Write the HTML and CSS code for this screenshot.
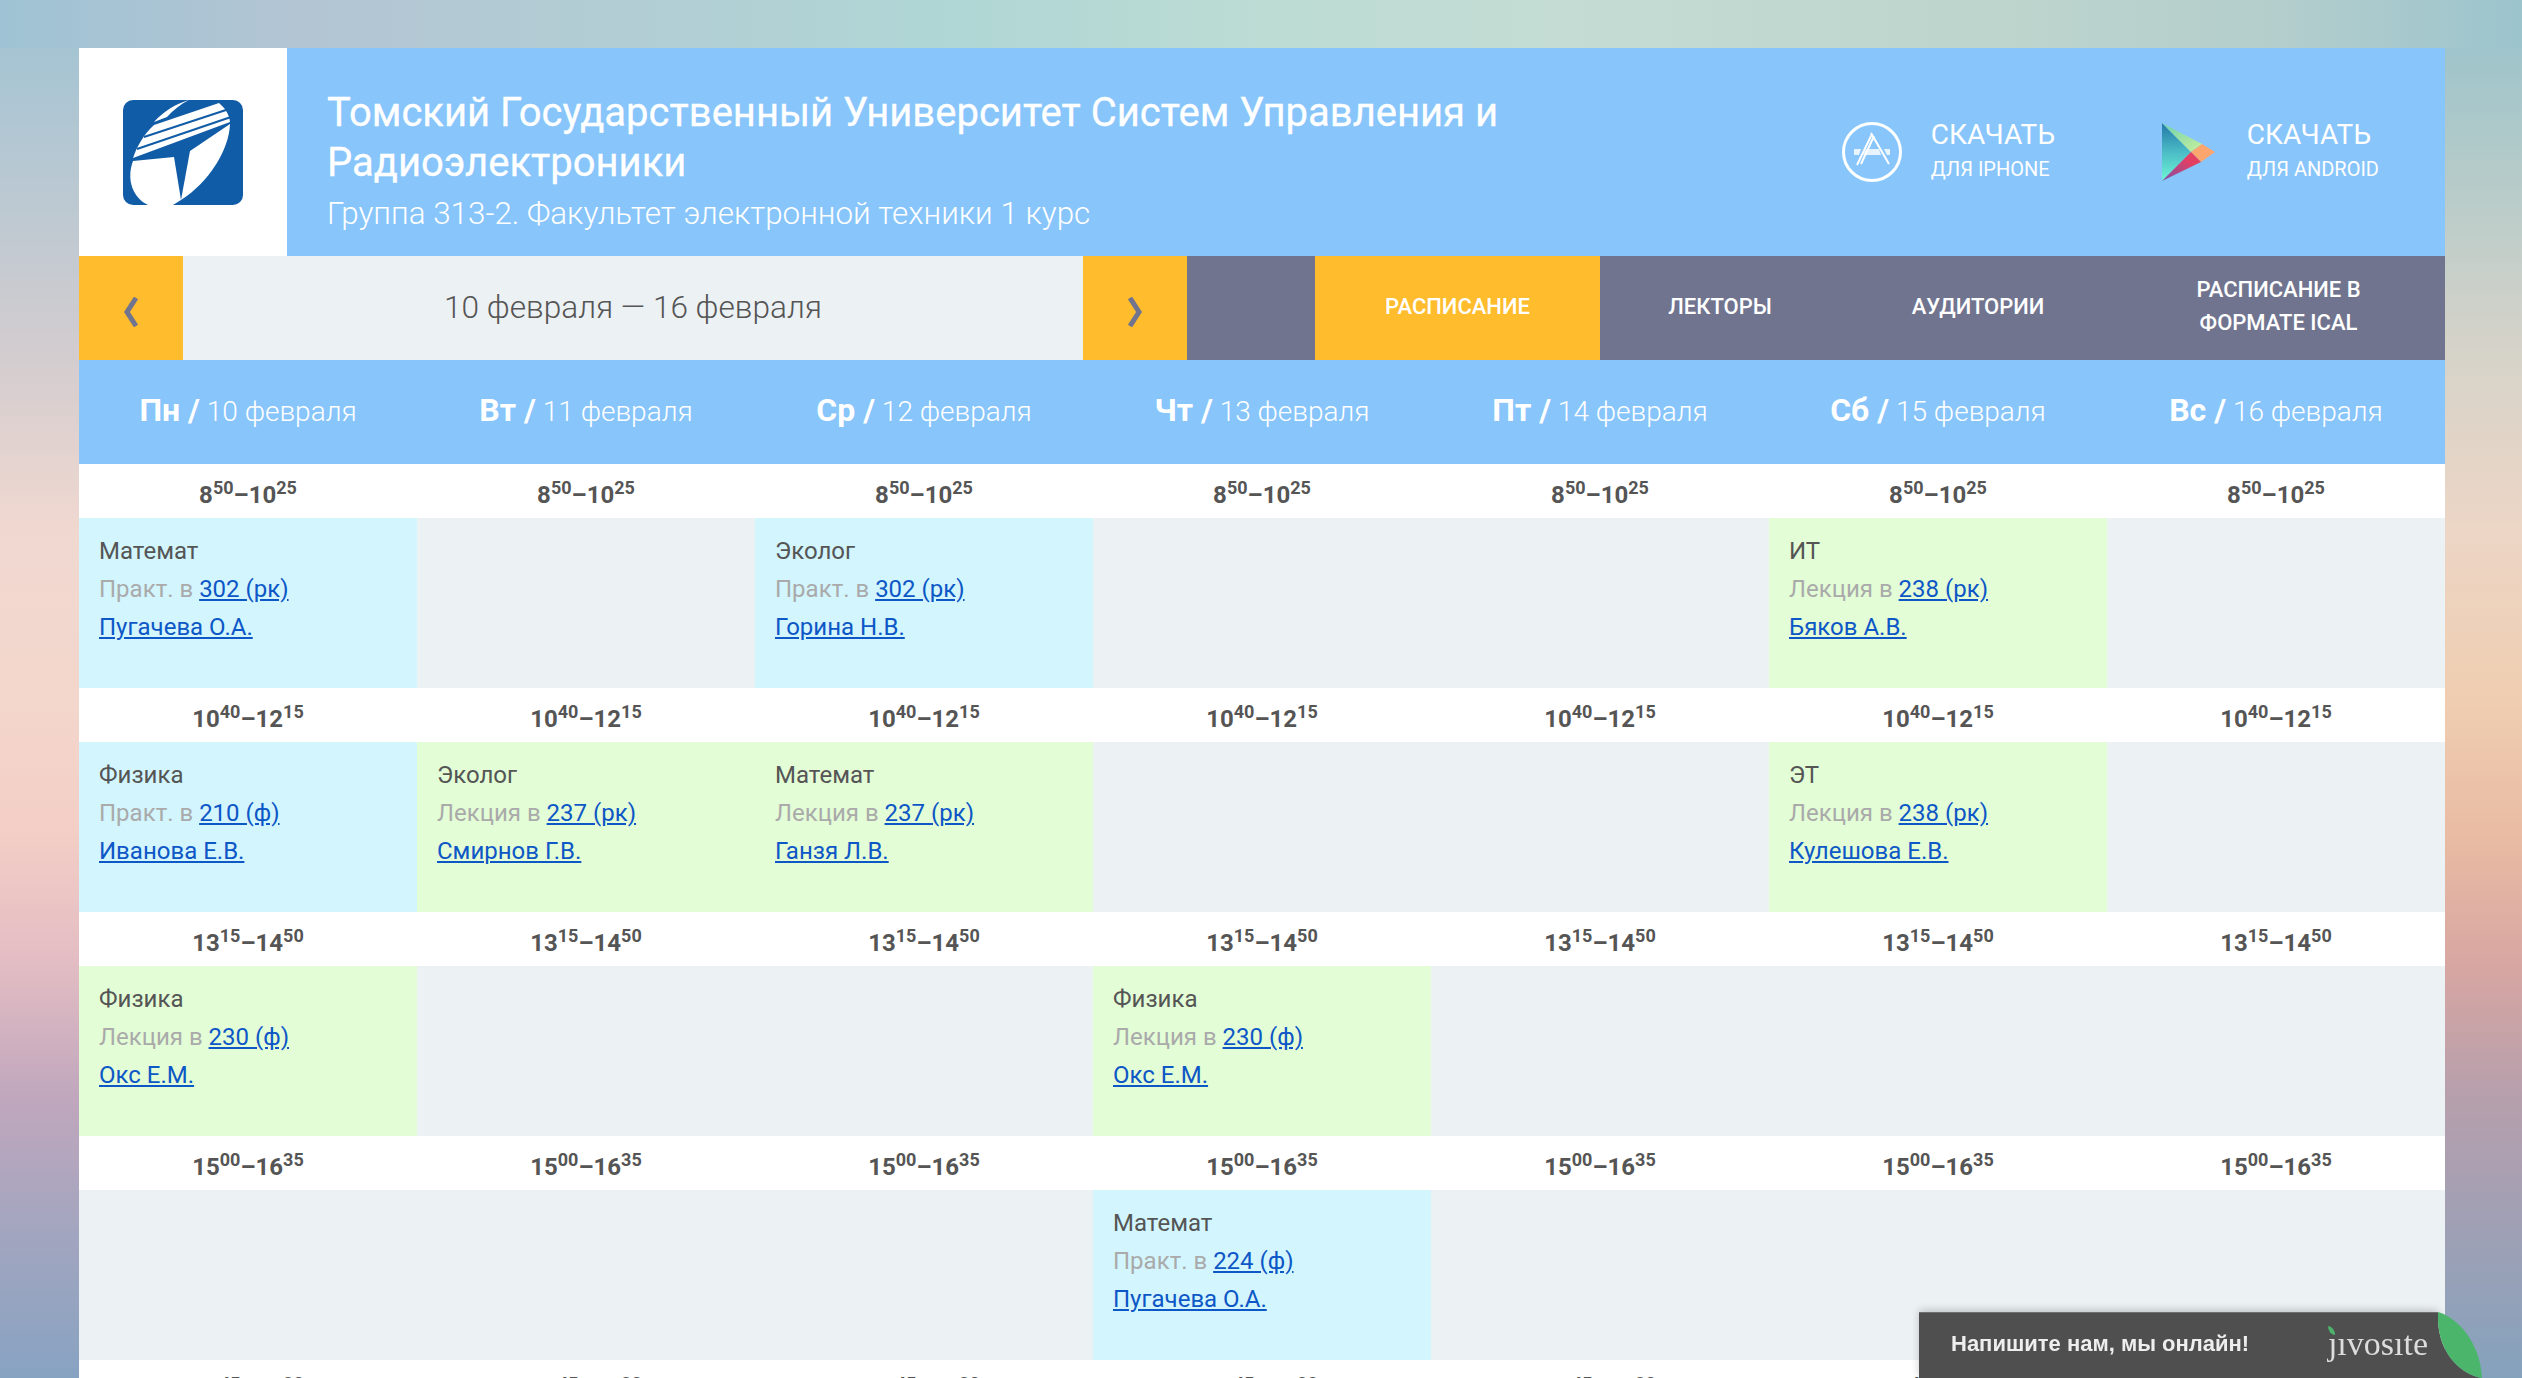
FILE: index.html
```html
<!DOCTYPE html>
<html lang="ru">
<head>
  <meta charset="UTF-8">
  <title>Расписание</title>
  <link rel="stylesheet" href="styles.css">
</head>
<body>
  <div class="page">
    <div class="top">
      <div class="logo">
        <svg width="120" height="105" viewBox="0 0 120 105">
          <rect width="120" height="105" rx="10" fill="#115ca6"/>
          <path d="M66 0 C52 4 40 12 31 22 L44 17 C50 10 58 4 66 0 Z" fill="#fff"/>
          <path d="M31 25 L96 3 C102 8 106 14 107 22 L10 58 C14 46 21 34 31 25 Z" fill="#fff"/>
          <path d="M21 37 L103 10 M14 49 L108 17" stroke="#115ca6" stroke-width="2" fill="none"/>
          <path d="M10 61 L51 57 L58 100 L50 105 L25 105 C10 98 3 80 10 61 Z" fill="#fff"/>
          <path d="M67 51 L107 24 C106 50 86 82 58 100 Z" fill="#fff"/>
        </svg>
      </div>
      <div class="title">
        <h1>Томский Государственный Университет Систем Управления и Радиоэлектроники</h1>
        <p>Группа 313-2. Факультет электронной техники 1 курс</p>
      </div>
      <div class="apps">
        <a class="app app-ios">
          <svg width="62" height="62" viewBox="0 0 62 62" fill="none" stroke="#fff">
            <circle cx="31" cy="31" r="28.5" stroke-width="3"/>
            <path d="M30 12 L48 43 M31 13 L16 44 M33 15 L20 43" stroke-width="2"/>
            <path d="M13 28 H20 L18 34 H13 Z M25 28 H38 L40 34 H22 Z M43 28 H49 V34 H46 Z" stroke="none" fill="#fff" opacity=".8"/>
          </svg>
          <span class="app-text"><b>СКАЧАТЬ</b><i>ДЛЯ IPHONE</i></span>
        </a>
        <a class="app app-android">
          <svg width="53" height="58" viewBox="0 0 53 58">
            <defs>
              <linearGradient id="playBlue" x1="0" y1="0" x2="0" y2="1">
                <stop offset="0" stop-color="#2377a8"/>
                <stop offset="0.5" stop-color="#4bbcc6"/>
                <stop offset="1" stop-color="#6ff5d4"/>
              </linearGradient>
              <linearGradient id="playRed" x1="1" y1="0" x2="0" y2="1">
                <stop offset="0.3" stop-color="#e33f63"/>
                <stop offset="1" stop-color="#7c4fa8"/>
              </linearGradient>
              <linearGradient id="playGreen" x1="0" y1="0" x2="1" y2="1">
                <stop offset="0" stop-color="#6fd1b0"/>
                <stop offset="1" stop-color="#c6f09c"/>
              </linearGradient>
            </defs>
            <path d="M0 0 L29 29 L0 58 Z" fill="url(#playBlue)"/>
            <path d="M0 0 L40 21 L29 29 Z" fill="url(#playGreen)"/>
            <path d="M40 21 L53 29 L39 39 L29 29 Z" fill="#fda56e"/>
            <path d="M0 58 L29 29 L39 39 Z" fill="url(#playRed)"/>
          </svg>
          <span class="app-text"><b>СКАЧАТЬ</b><i>ДЛЯ ANDROID</i></span>
        </a>
      </div>
    </div>

    <div class="nav">
      <a class="arrow">
        <svg width="18" height="30" viewBox="0 0 18 30"><path d="M14 1 L5 15 L14 29" fill="none" stroke="#70748f" stroke-width="5"/></svg>
      </a>
      <div class="dates">10 февраля — 16 февраля</div>
      <a class="arrow">
        <svg width="18" height="30" viewBox="0 0 18 30"><path d="M4 1 L13 15 L4 29" fill="none" stroke="#70748f" stroke-width="5"/></svg>
      </a>
      <div class="nav-gap"></div>
      <a class="tab tab-active">РАСПИСАНИЕ</a>
      <a class="tab tab-lect">ЛЕКТОРЫ</a>
      <a class="tab tab-room">АУДИТОРИИ</a>
      <a class="tab tab-ical">РАСПИСАНИЕ В<br>ФОРМАТЕ ICAL</a>
    </div>

    <div class="days">
      <div class="day"><b>Пн /</b> 10 февраля</div>
      <div class="day"><b>Вт /</b> 11 февраля</div>
      <div class="day"><b>Ср /</b> 12 февраля</div>
      <div class="day"><b>Чт /</b> 13 февраля</div>
      <div class="day"><b>Пт /</b> 14 февраля</div>
      <div class="day"><b>Сб /</b> 15 февраля</div>
      <div class="day"><b>Вс /</b> 16 февраля</div>
    </div>

    <div class="grid">
      <div class="time">8<sup>50</sup>–10<sup>25</sup></div>
      <div class="time">8<sup>50</sup>–10<sup>25</sup></div>
      <div class="time">8<sup>50</sup>–10<sup>25</sup></div>
      <div class="time">8<sup>50</sup>–10<sup>25</sup></div>
      <div class="time">8<sup>50</sup>–10<sup>25</sup></div>
      <div class="time">8<sup>50</sup>–10<sup>25</sup></div>
      <div class="time">8<sup>50</sup>–10<sup>25</sup></div>

      <div class="cell practice">
        <div>Математ</div>
        <div><span class="kind">Практ. в</span> <a href="#">302 (рк)</a></div>
        <div><a href="#">Пугачева О.А.</a></div>
      </div>
      <div class="cell"></div>
      <div class="cell practice">
        <div>Эколог</div>
        <div><span class="kind">Практ. в</span> <a href="#">302 (рк)</a></div>
        <div><a href="#">Горина Н.В.</a></div>
      </div>
      <div class="cell"></div>
      <div class="cell"></div>
      <div class="cell lecture">
        <div>ИТ</div>
        <div><span class="kind">Лекция в</span> <a href="#">238 (рк)</a></div>
        <div><a href="#">Бяков А.В.</a></div>
      </div>
      <div class="cell"></div>

      <div class="time">10<sup>40</sup>–12<sup>15</sup></div>
      <div class="time">10<sup>40</sup>–12<sup>15</sup></div>
      <div class="time">10<sup>40</sup>–12<sup>15</sup></div>
      <div class="time">10<sup>40</sup>–12<sup>15</sup></div>
      <div class="time">10<sup>40</sup>–12<sup>15</sup></div>
      <div class="time">10<sup>40</sup>–12<sup>15</sup></div>
      <div class="time">10<sup>40</sup>–12<sup>15</sup></div>

      <div class="cell practice">
        <div>Физика</div>
        <div><span class="kind">Практ. в</span> <a href="#">210 (ф)</a></div>
        <div><a href="#">Иванова Е.В.</a></div>
      </div>
      <div class="cell lecture">
        <div>Эколог</div>
        <div><span class="kind">Лекция в</span> <a href="#">237 (рк)</a></div>
        <div><a href="#">Смирнов Г.В.</a></div>
      </div>
      <div class="cell lecture">
        <div>Математ</div>
        <div><span class="kind">Лекция в</span> <a href="#">237 (рк)</a></div>
        <div><a href="#">Ганзя Л.В.</a></div>
      </div>
      <div class="cell"></div>
      <div class="cell"></div>
      <div class="cell lecture">
        <div>ЭТ</div>
        <div><span class="kind">Лекция в</span> <a href="#">238 (рк)</a></div>
        <div><a href="#">Кулешова Е.В.</a></div>
      </div>
      <div class="cell"></div>

      <div class="time">13<sup>15</sup>–14<sup>50</sup></div>
      <div class="time">13<sup>15</sup>–14<sup>50</sup></div>
      <div class="time">13<sup>15</sup>–14<sup>50</sup></div>
      <div class="time">13<sup>15</sup>–14<sup>50</sup></div>
      <div class="time">13<sup>15</sup>–14<sup>50</sup></div>
      <div class="time">13<sup>15</sup>–14<sup>50</sup></div>
      <div class="time">13<sup>15</sup>–14<sup>50</sup></div>

      <div class="cell lecture">
        <div>Физика</div>
        <div><span class="kind">Лекция в</span> <a href="#">230 (ф)</a></div>
        <div><a href="#">Окс Е.М.</a></div>
      </div>
      <div class="cell"></div>
      <div class="cell"></div>
      <div class="cell lecture">
        <div>Физика</div>
        <div><span class="kind">Лекция в</span> <a href="#">230 (ф)</a></div>
        <div><a href="#">Окс Е.М.</a></div>
      </div>
      <div class="cell"></div>
      <div class="cell"></div>
      <div class="cell"></div>

      <div class="time">15<sup>00</sup>–16<sup>35</sup></div>
      <div class="time">15<sup>00</sup>–16<sup>35</sup></div>
      <div class="time">15<sup>00</sup>–16<sup>35</sup></div>
      <div class="time">15<sup>00</sup>–16<sup>35</sup></div>
      <div class="time">15<sup>00</sup>–16<sup>35</sup></div>
      <div class="time">15<sup>00</sup>–16<sup>35</sup></div>
      <div class="time">15<sup>00</sup>–16<sup>35</sup></div>

      <div class="cell"></div>
      <div class="cell"></div>
      <div class="cell"></div>
      <div class="cell practice">
        <div>Математ</div>
        <div><span class="kind">Практ. в</span> <a href="#">224 (ф)</a></div>
        <div><a href="#">Пугачева О.А.</a></div>
      </div>
      <div class="cell"></div>
      <div class="cell"></div>
      <div class="cell"></div>

      <div class="time">16<sup>45</sup>–18<sup>20</sup></div>
      <div class="time">16<sup>45</sup>–18<sup>20</sup></div>
      <div class="time">16<sup>45</sup>–18<sup>20</sup></div>
      <div class="time">16<sup>45</sup>–18<sup>20</sup></div>
      <div class="time">16<sup>45</sup>–18<sup>20</sup></div>
      <div class="time">16<sup>45</sup>–18<sup>20</sup></div>
      <div class="time">16<sup>45</sup>–18<sup>20</sup></div>
    </div>
  </div>

  <div class="chat">
    <div class="chat-body">
      <span class="chat-text">Напишите нам, мы онлайн!</span>
      <span class="chat-brand">ȷıvosıte<span class="chat-dot"></span></span>
    </div>
    <svg class="chat-leaf" width="44" height="66" viewBox="0 0 44 66">
      <path d="M0 0 C-2 40 22 62 44 66 L0 66 Z" fill="#4f4f4f"/>
      <path d="M0 0 C20 6 42 30 44 66 C22 62 -2 40 0 0 Z" fill="#4bb66b"/>
    </svg>
  </div>
</body>
</html>
```

FILE: styles.css
```css
*{
  margin: 0;
  padding: 0;
  box-sizing: border-box;
}

html,
body{
  height: 100%;
  overflow: hidden;
}
body{
  font-family: Roboto, "Liberation Sans", sans-serif;
  color: #555;
  background-color: #d8d0cc;
  background-image:
    linear-gradient(90deg, #9fc3d4 0, #b3c5d3 12%, #b0d6d5 38%, #bcdcd4 50%, #c4dcd4 62%, #bdd4cd 80%, #b4cecc 90%, #9cc4cd 100%),
    linear-gradient(180deg, #9ec3d3 0, #b8c8d2 176px, #d2cccf 351px, #f0d8d0 527px, #f3d6cc 703px, #f3cec6 835px, #e2bcc3 967px, #c0a7bd 1098px, #a3a5bf 1230px, #87a3c2 1378px),
    linear-gradient(180deg, #97c2cc 0, #b5cbc9 176px, #d6d3c9 351px, #ecd6c6 527px, #efcdb0 703px, #e9bca3 835px, #d7a6a2 967px, #b69fac 1098px, #9fa0b5 1230px, #85a2bd 1378px);
  background-repeat: no-repeat;
  background-size: 100% 48px, 79px 100%, 77px 100%;
  background-position: 0 0, 0 0, 100% 0;
}

.page{
  width: 2366px;
  margin: 48px 0 0 79px;
  background: #fff;
}

.top{
  display: flex;
  height: 208px;
  background: #87c5fb;
  color: #fff;
}
.logo{
  flex: none;
  display: flex;
  align-items: center;
  justify-content: center;
  width: 208px;
  background: #fff;
}
.title{
  flex: 1;
  padding: 40px 0 0 40px;
}
.title h1{
  width: 1240px;
  font-size: 40px;
  line-height: 50px;
  font-weight: 400;
  -webkit-text-stroke: 0.3px #fff;
}
.title p{
  margin-top: 4px;
  font-size: 31.4px;
  line-height: 44px;
  font-weight: 300;
}

.apps{
  flex: none;
  display: flex;
  padding: 0 66px 0 0;
}
.app{
  display: flex;
  align-items: center;
  gap: 28px;
}
.app-ios{
  width: 321px;
}
.app-android{
  gap: 32px;
}
.app-text{
  display: flex;
  flex-direction: column;
  margin-bottom: 6px;
}
.app-text b{
  font-size: 28px;
  line-height: 40px;
  font-weight: 400;
}
.app-text i{
  font-size: 20px;
  line-height: 28px;
  font-style: normal;
}

.nav{
  display: flex;
  height: 104px;
  background: #70748f;
  color: #fff;
}
.arrow{
  flex: none;
  display: flex;
  align-items: center;
  justify-content: center;
  width: 104px;
  padding-top: 8px;
  background: #ffbc2c;
}
.dates{
  flex: none;
  width: 900px;
  text-align: center;
  font-size: 31.6px;
  font-weight: 300;
  line-height: 104px;
  color: #555;
  background: #ecf1f4;
}
.nav-gap{
  flex: none;
  width: 128px;
}
.tab{
  flex: none;
  display: flex;
  align-items: center;
  justify-content: center;
  padding-bottom: 4px;
  text-align: center;
  font-size: 22px;
  line-height: 33px;
  font-weight: 500;
}
.tab-active{
  width: 285px;
  background: #ffbc2c;
}
.tab-lect{
  width: 240px;
}
.tab-room{
  width: 276px;
}
.tab-ical{
  width: 325px;
}

.days{
  display: grid;
  grid-template-columns: repeat(7, 338px);
  height: 104px;
  background: #87c5fb;
  color: #fff;
}
.day{
  text-align: center;
  font-size: 28px;
  font-weight: 300;
  line-height: 100px;
}
.day b{
  font-size: 32px;
  font-weight: 700;
}

.grid{
  display: grid;
  grid-template-columns: repeat(7, 338px);
  grid-auto-rows: 54px 170px;
}
.time{
  padding-top: 4px;
  text-align: center;
  font-size: 24px;
  font-weight: 700;
  line-height: 54px;
  color: #555;
}
.time sup{
  font-size: 18px;
  line-height: 0;
}
.cell{
  padding: 14px 20px 0;
  font-size: 24px;
  line-height: 38px;
  color: #555;
  background: #ecf1f4;
}
.practice{
  background: #d2f5fe;
}
.lecture{
  background: #e3fdd6;
}
.kind{
  color: #aaa;
}
.cell a{
  color: #0d57c6;
}

.chat{
  position: fixed;
  left: 1919px;
  top: 1312px;
  display: flex;
  width: 563px;
  height: 66px;
}
.chat-body{
  flex: 1;
  display: flex;
  align-items: center;
  justify-content: space-between;
  padding: 0 10px 4px 32px;
  border-top: 1px solid #6f6f6f;
  background: #4f4f4f;
  box-shadow: 0 -2px 8px rgba(0,0,0,0.2);
}
.chat-text{
  font: bold 22px "Liberation Sans", sans-serif;
  color: #eee;
}
.chat-brand{
  position: relative;
  font: 34px "Liberation Serif", serif;
  color: #ddd;
}
.chat-dot{
  position: absolute;
  left: 0;
  top: 1px;
  width: 7px;
  height: 9px;
  background: #4bb66b;
  border-radius: 0 100% 0 100%;
}
.chat-leaf{
  flex: none;
}
```
